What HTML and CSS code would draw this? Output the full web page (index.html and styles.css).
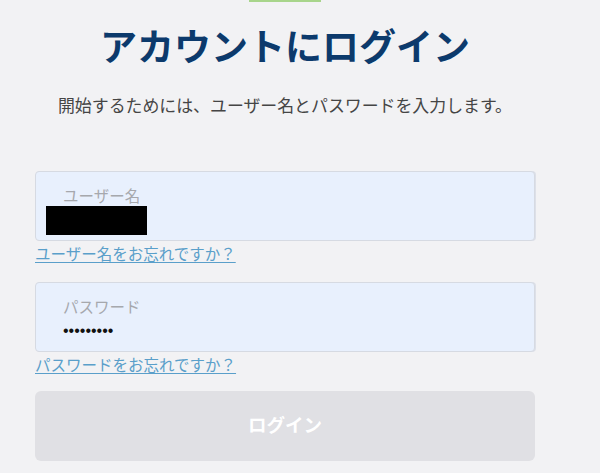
FILE: index.html
```html
<!DOCTYPE html>
<html lang="ja">
<head>
<meta charset="utf-8">
<title>アカウントにログイン</title>
<link rel="stylesheet" href="styles.css">
</head>
<body>
<div class="page">
  <div class="accent"></div>
  <h1 class="title">アカウントにログイン</h1>
  <p class="lead">開始するためには、ユーザー名とパスワードを入力します。</p>
  <form class="form">
    <div class="field field-user">
      <span class="label">ユーザー名</span>
      <span class="redact"></span>
    </div>
    <a class="forgot" href="#">ユーザー名をお忘れですか？</a>
    <div class="field field-pass">
      <span class="label">パスワード</span>
      <span class="dots">•••••••••</span>
    </div>
    <a class="forgot" href="#">パスワードをお忘れですか？</a>
    <button class="submit" type="button">ログイン</button>
  </form>
</div>
</body>
</html>
```

FILE: styles.css
```css
html, body {
  margin: 0;
  padding: 0;
  background: #f2f2f4;
}
body {
  font-family: "Noto Sans CJK JP", "Noto Sans", sans-serif;
}
.page {
  width: 500px;
  padding-left: 35px;
}
.accent {
  width: 72px;
  height: 2px;
  margin: 0 auto;
  background: #a8d58b;
}
.title {
  margin: 21px 0 0;
  font-size: 37px;
  line-height: 44px;
  font-weight: 700;
  color: #0c3a6c;
  text-align: center;
}
.lead {
  margin: 26px 0 0;
  font-size: 16.9px;
  line-height: 24px;
  color: #454545;
  text-align: center;
}
.form {
  margin-top: 54px;
  display: flex;
  flex-direction: column;
  align-items: flex-start;
}
.field {
  box-sizing: border-box;
  width: 500px;
  height: 70px;
  background: #e8f0fd;
  border: 1px solid #d6dae2;
  border-radius: 4px;
  box-shadow: 1px 0 0 #dde0e8;
  padding: 13px 0 0 27px;
  display: flex;
  flex-direction: column;
  align-items: flex-start;
}
.label {
  font-size: 15.5px;
  line-height: 20px;
  color: #a6a8ad;
}
.redact {
  display: block;
  width: 101px;
  height: 29px;
  margin: 1px 0 0 -17px;
  background: #000;
}
.dots {
  font-family: "Liberation Sans", sans-serif;
  font-size: 16px;
  line-height: 20px;
  color: #111;
  margin-top: 5px;
}
.forgot {
  margin-top: 2px;
  font-size: 15.5px;
  line-height: 20px;
  color: #5a9fca;
  text-decoration: underline;
  text-underline-offset: 2px;
}
.field-pass {
  margin-top: 19px;
}
.submit {
  margin-top: 17px;
  width: 500px;
  height: 70px;
  border: 0;
  border-radius: 6px;
  background: #e0e0e4;
  color: #fff;
  font-family: "Noto Sans CJK JP", "Noto Sans", sans-serif;
  font-size: 18.5px;
  line-height: 24px;
  font-weight: 700;
  padding: 0 0 5px;
}
```
